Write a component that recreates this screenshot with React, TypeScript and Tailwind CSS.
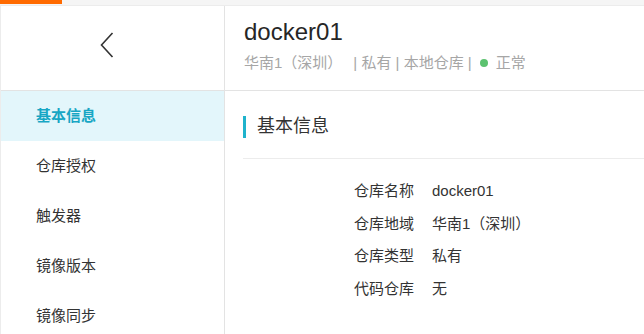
import React from "react";

const font = { fontFamily: '"Liberation Sans", "Noto Sans CJK SC", sans-serif' };

export default function App() {
  const menu = ["基本信息", "仓库授权", "触发器", "镜像版本", "镜像同步"];
  const rows: [string, string][] = [
    ["仓库名称", "docker01"],
    ["仓库地域", "华南1（深圳）"],
    ["仓库类型", "私有"],
    ["代码仓库", "无"],
  ];
  return (
    <div className="w-[644px] h-[334px] overflow-hidden bg-white flex flex-col" style={font}>
      <div className="h-[5px] bg-[#f5f5f5] flex shrink-0">
        <div className="w-[62px] h-[4px] bg-[#ff6a00]" />
      </div>
      <div className="flex flex-1 border-t border-l border-[#ececec] min-h-0">
        <aside className="w-[224px] shrink-0 border-r border-[#e3e3e3] flex flex-col">
          <div className="h-[85px] shrink-0 flex items-center justify-center border-b border-[#e3e3e3] pr-[12px] pb-[6px]">
            <svg width="14" height="26" viewBox="0 0 14 26" fill="none">
              <path d="M12.5 1 L1.5 13 L12.5 25" stroke="#333" strokeWidth="1.6" />
            </svg>
          </div>
          {menu.map((m, i) => (
            <div
              key={m}
              className={
                i === 0
                  ? "h-[50px] shrink-0 flex items-center pl-[35px] text-[15px] bg-[#e3f6fb] text-[#17a6c4] font-bold"
                  : "h-[50px] shrink-0 flex items-center pl-[35px] text-[15px] text-[#333]"
              }
            >
              {m}
            </div>
          ))}
        </aside>
        <main className="flex-1 flex flex-col">
          <div className="h-[85px] shrink-0 border-b border-[#e3e3e3] pl-[19px] pt-[12px]">
            <div className="text-[24px] leading-[28px] text-[#262626]">docker01</div>
            <div className="mt-[7px] flex items-center text-[15px] leading-[20px] text-[#a6a6a6] whitespace-pre">
              <span>华南1（深圳）</span>
              <span className="ml-[11px]">| 私有 | 本地仓库 |</span>
              <span className="ml-[8px] w-[8px] h-[8px] rounded-full bg-[#5cc26f]" />
              <span className="ml-[8px]">正常</span>
            </div>
          </div>
          <div className="pl-[18px]">
            <div className="h-[68px] pt-[4px] flex items-center border-b border-[#ececec]">
              <div className="w-[3px] h-[22px] bg-[#1fb3cc]" />
              <div className="ml-[11px] text-[18px] text-[#333]">基本信息</div>
            </div>
            <div className="pt-[16px] pl-[111px] flex flex-col">
              {rows.map(([k, v]) => (
                <div key={k} className="h-[32.6px] flex items-center text-[15px] text-[#333]">
                  <span className="w-[78px]">{k}</span>
                  <span>{v}</span>
                </div>
              ))}
            </div>
          </div>
        </main>
      </div>
    </div>
  );
}
